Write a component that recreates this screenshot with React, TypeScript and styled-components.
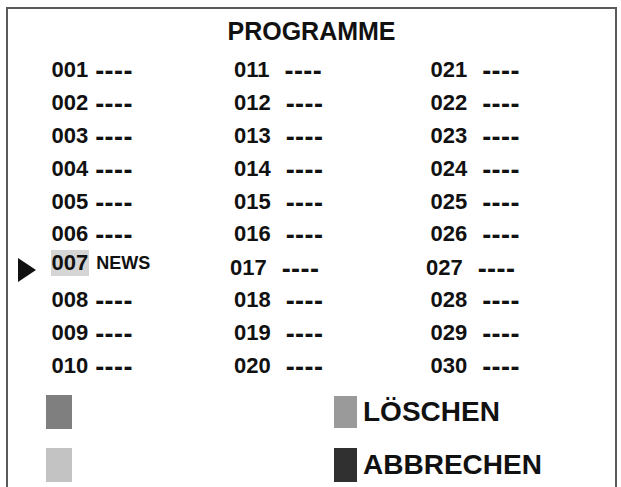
import React from 'react';
import styled, { createGlobalStyle } from 'styled-components';

// ===== グローバルスタイル =====
const GlobalStyle = createGlobalStyle`
  html, body {
    margin: 0;
    padding: 0;
    height: 100%;
    background: #ffffff;
  }
  body {
    font-family: 'Liberation Sans', Arial, sans-serif;
    color: #111;
    overflow: hidden;
  }
`;

// 外枠（下辺なし）
const Frame = styled.div`
  margin: 7px 4px 0 6px;
  height: 480px;
  border: 2px solid #5a5a5a;
  border-bottom: none;
  box-sizing: border-box;
`;

const Title = styled.h1`
  margin: 0;
  padding-top: 8px;
  font-size: 25px;
  line-height: 28px;
  font-weight: 700;
  text-align: center;
  color: #111;
`;

// 番組リスト：マーカー列 + 3列
const ChannelGrid = styled.div`
  margin-top: 9px;
  display: grid;
  grid-template-columns: 43.5px 182.5px 196.5px 1fr;
  grid-auto-rows: 32.8px;
`;

const MarkerCell = styled.div`
  display: flex;
  align-items: center;
  padding-left: 10px;
`;

const Cell = styled.div`
  display: flex;
  align-items: center;
`;

const Entry = styled.div<{ $dx?: number; $dy?: number }>`
  display: flex;
  align-items: center;
  font-size: 22px;
  font-weight: 700;
  line-height: 26px;
  margin-left: ${(p) => p.$dx ?? 0}px;
  margin-top: ${(p) => (p.$dy ?? 0) * 2}px;
`;

const Num = styled.span<{ $active?: boolean }>`
  display: inline-block;
  padding: 0 1px;
  margin-left: -1px;
  background: ${(p) => (p.$active ? '#d5d5d5' : 'transparent')};
`;

// 空きチャンネルの「----」（太めの短いダッシュ）
const Dashes = styled.span<{ $gap: number }>`
  margin-left: ${(p) => p.$gap}px;
  font-size: 27px;
  line-height: 26px;
  letter-spacing: 0.4px;
  margin-top: 2px;
`;

const Name = styled.span`
  margin-left: 7px;
  font-size: 18px;
  font-weight: 700;
`;

// 下部の凡例
const Legend = styled.div`
  margin-top: 13.5px;
  padding-left: 38px;
  display: grid;
  grid-template-columns: 288px 1fr;
  grid-auto-rows: 34px;
  row-gap: 19px;
`;

const LegendItem = styled.div`
  display: flex;
  align-items: center;
`;

const Swatch = styled.div<{ $color: string; $w: number; $h: number }>`
  width: ${(p) => p.$w}px;
  height: ${(p) => p.$h}px;
  background: ${(p) => p.$color};
  flex-shrink: 0;
`;

const LegendLabel = styled.span`
  margin-left: 6px;
  font-size: 28px;
  font-weight: 700;
  line-height: 32px;
  color: #111;
`;

const Arrow = styled.svg<{ $dy: number }>`
  margin-top: ${(p) => p.$dy * 2}px;
`;

const pad = (n: number) => String(n).padStart(3, '0');

interface Tweak {
  dx?: number;
  dy?: number;
}

const tweaks: Record<number, Tweak> = {
  7: { dy: -4 },
  17: { dx: -4, dy: 1 },
  27: { dx: -4.5, dy: 1 },
};

export default function App() {
  const rows = Array.from({ length: 10 }, (_, i) => i);

  return (
    <>
      <GlobalStyle />
      <Frame>
        <Title>PROGRAMME</Title>
        <ChannelGrid>
          {rows.map((r) => (
            <React.Fragment key={r}>
              <MarkerCell>
                {r === 6 && (
                  <Arrow $dy={3} width="18" height="24" viewBox="0 0 18 24">
                    <polygon points="0,0 18,12 0,24" fill="#111" />
                  </Arrow>
                )}
              </MarkerCell>
              {[0, 1, 2].map((c) => {
                const n = c * 10 + r + 1;
                const t = tweaks[n] ?? {};
                const selected = n === 7;
                return (
                  <Cell key={c}>
                    <Entry $dx={t.dx} $dy={t.dy}>
                      <Num $active={selected}>{pad(n)}</Num>
                      {selected ? (
                        <Name>NEWS</Name>
                      ) : (
                        <Dashes $gap={c === 0 ? 6 : 14}>----</Dashes>
                      )}
                    </Entry>
                  </Cell>
                );
              })}
            </React.Fragment>
          ))}
        </ChannelGrid>
        <Legend>
          <LegendItem>
            <Swatch $color="#7f7f7f" $w={26} $h={34} />
          </LegendItem>
          <LegendItem>
            <Swatch $color="#9a9a9a" $w={23} $h={32} />
            <LegendLabel>LÖSCHEN</LegendLabel>
          </LegendItem>
          <LegendItem>
            <Swatch $color="#c3c3c3" $w={26} $h={34} />
          </LegendItem>
          <LegendItem>
            <Swatch $color="#303030" $w={23} $h={34} />
            <LegendLabel>ABBRECHEN</LegendLabel>
          </LegendItem>
        </Legend>
      </Frame>
    </>
  );
}
